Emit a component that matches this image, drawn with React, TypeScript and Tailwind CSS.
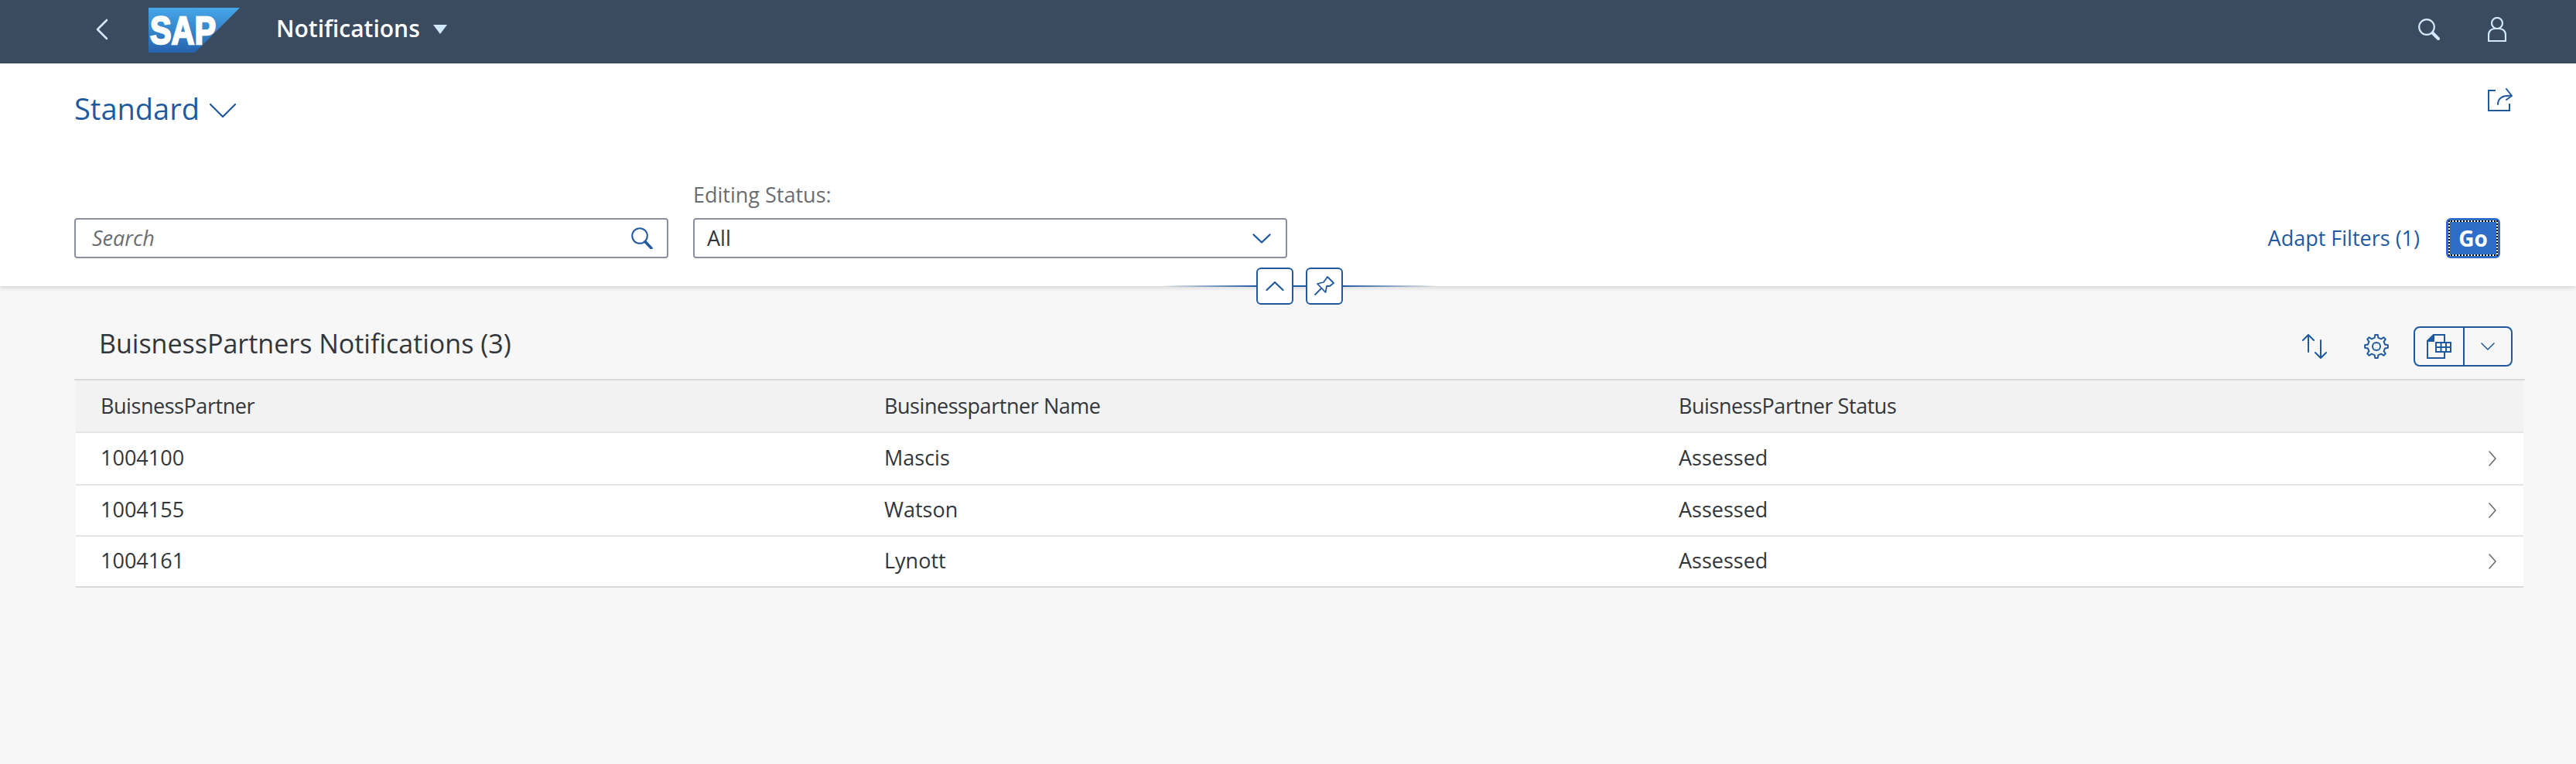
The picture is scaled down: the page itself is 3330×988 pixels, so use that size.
import React from "react";

const rows = [
  ["1004100", "Mascis", "h-[68px]", "border-[#e5e5e5]"],
  ["1004155", "Watson", "h-[66px]", "border-[#e5e5e5]"],
  ["1004161", "Lynott", "h-[66px]", "border-[#d9d9d9]"],
];

function gearPath() {
  const pts: string[] = [];
  const n = 8;
  for (let i = 0; i < n; i++) {
    const a = (i / n) * Math.PI * 2 - Math.PI / 2;
    const step = (Math.PI * 2) / n;
    const list: [number, number][] = [
      [a - step * 0.27, 11.4],
      [a - step * 0.15, 15],
      [a + step * 0.15, 15],
      [a + step * 0.27, 11.4],
    ];
    for (const [t, r] of list) {
      pts.push(`${(16 + r * Math.cos(t)).toFixed(2)} ${(16 + r * Math.sin(t)).toFixed(2)}`);
    }
  }
  return "M" + pts.join(" L") + " Z";
}

function Logo() {
  return (
    <svg viewBox="0 0 118 58" className="w-[118px] h-[58px] ml-[52px] mt-[-5px]">
      <defs>
        <linearGradient id="g" x1="0" y1="0" x2="0" y2="1">
          <stop offset="0" stopColor="#47a7e8" />
          <stop offset="1" stopColor="#2563ad" />
        </linearGradient>
      </defs>
      <polygon points="0,0 118,0 60,58 0,58" fill="url(#g)" />
      <text x="2" y="47" fontFamily="'Liberation Sans', sans-serif" fontWeight="700" fontSize="50" fill="#fff" stroke="#fff" strokeWidth="2.4" textLength="85" lengthAdjust="spacingAndGlyphs">SAP</text>
    </svg>
  );
}

export default function App() {
  return (
    <div className="w-[3330px] h-[988px] bg-[#f7f7f7] flex flex-col overflow-hidden text-[#32363a] font-['Open_Sans',sans-serif]">
      <header className="h-[82px] bg-[#3a4a5f] flex items-center shrink-0">
        <svg viewBox="0 0 16 28" className="w-[16px] h-[28px] ml-[124px] mt-[-6px] text-[#d1e8ff]" fill="none" stroke="currentColor" strokeWidth="2.6" strokeLinecap="round" strokeLinejoin="round">
          <path d="M14 2 L2 14 L14 26" />
        </svg>
        <Logo />
        <div className="ml-[47px] text-[30px] font-semibold text-white leading-none mt-[-8px]">Notifications</div>
        <div className="ml-[17px] mt-[-6px] w-0 h-0 border-l-[9px] border-r-[9px] border-t-[12px] border-l-transparent border-r-transparent border-t-[#d1e8ff]" />
        <div className="ml-auto flex items-center mr-[90px] mt-[-6px] text-[#d1e8ff]">
          <svg viewBox="0 0 28 28" className="w-[28px] h-[28px]" fill="none" stroke="currentColor" strokeWidth="2.2">
            <circle cx="11" cy="11" r="9.8" />
            <path d="M18.5 18.5 L26 26" strokeWidth="4" strokeLinecap="round" />
          </svg>
          <svg viewBox="0 0 24 32" className="w-[24px] h-[32px] ml-[62px]" fill="none" stroke="currentColor" strokeWidth="2.2">
            <circle cx="12" cy="8" r="7" />
            <path d="M1 31 V23 a8 8 0 0 1 8 -8 h6 a8 8 0 0 1 8 8 V31 Z" />
          </svg>
        </div>
      </header>

      <section className="relative h-[288px] bg-white shadow-[0_2px_6px_rgba(0,0,0,0.15)] shrink-0 px-[96px] flex flex-col">
        <div className="flex items-start justify-between pt-[34px]">
          <div className="flex items-center text-[#1f5aa0]">
            <span className="text-[38px] leading-[48px]">Standard</span>
            <svg viewBox="0 0 34 18" className="w-[34px] h-[18px] ml-[13px] mt-[6px]" fill="none" stroke="currentColor" strokeWidth="2.2" strokeLinecap="round" strokeLinejoin="round">
              <path d="M1 1 L17 17 L33 1" />
            </svg>
          </div>
          <svg viewBox="0 0 32 30" className="w-[32px] h-[30px] mr-[-14px] mt-[-2px] text-[#1f5aa0]" fill="none" stroke="currentColor" strokeWidth="2">
            <path d="M10 3 H1 V29 H28 V20" />
            <path d="M13 21 C13 13 19 9 31 10 M24 1 L31 10 L24 15" strokeLinecap="round" strokeLinejoin="round" />
          </svg>
        </div>
        <div className="flex items-end mt-[70px]">
          <div className="w-[768px] h-[52px] border-2 border-[#89919a] rounded-[4px] flex items-center pl-[21px] pr-[18px]">
            <span className="italic text-[#6a6d70] text-[27px]">Search</span>
            <svg viewBox="0 0 28 28" className="w-[28px] h-[28px] ml-auto text-[#1f5aa0]" fill="none" stroke="currentColor" strokeWidth="2">
              <circle cx="11" cy="11" r="9.8" />
              <path d="M18 18.5 L26 27" strokeWidth="3.5" strokeLinecap="round" />
            </svg>
          </div>
          <div className="ml-[32px] flex flex-col">
            <div className="text-[27px] leading-[36px] text-[#6a6d70] mb-[12px]">Editing Status:</div>
            <div className="w-[768px] h-[52px] border-2 border-[#89919a] rounded-[4px] flex items-center pl-[16px] pr-[19px] text-[#1f5aa0]">
              <span className="text-[27px] text-[#32363a]">All</span>
              <svg viewBox="0 0 24 13" className="w-[24px] h-[13px] ml-auto" fill="none" stroke="currentColor" strokeWidth="2.4" strokeLinecap="round" strokeLinejoin="round">
                <path d="M1.5 1.5 L12 11.5 L22.5 1.5" />
              </svg>
            </div>
          </div>
          <div className="ml-auto flex items-center h-[52px] mr-[2px]">
            <span className="text-[27px] text-[#1f5aa0]">Adapt Filters (1)</span>
            <div className="ml-[34px] w-[70px] h-[52px] rounded-[6px] bg-[#2e6dc8] flex items-center justify-center p-[3px]">
              <div className="w-full h-full border-2 border-dotted border-black bg-white">
                <div className="w-full h-full bg-[#2e6dc8] flex items-center justify-center text-white font-bold text-[28px]">Go</div>
              </div>
            </div>
          </div>
        </div>

        <div className="absolute left-[1500px] top-[287px] w-[360px] h-[2px] bg-[linear-gradient(90deg,transparent,#1f5aa0_35%,#1f5aa0_65%,transparent)]" />
        <div className="absolute left-[1624px] top-[264px] w-[48px] h-[48px] bg-white border-2 border-[#1f5aa0] rounded-[6px] flex items-center justify-center text-[#1f5aa0]">
          <svg viewBox="0 0 24 12" className="w-[24px] h-[12px]" fill="none" stroke="currentColor" strokeWidth="2.2" strokeLinecap="round" strokeLinejoin="round">
            <path d="M1.5 11 L12 1 L22.5 11" />
          </svg>
        </div>
        <div className="absolute left-[1688px] top-[264px] w-[48px] h-[48px] bg-white border-2 border-[#1f5aa0] rounded-[6px] flex items-center justify-center text-[#1f5aa0]">
          <svg viewBox="0 0 28 28" className="w-[28px] h-[28px]" fill="none" stroke="currentColor" strokeWidth="1.8" strokeLinejoin="round" strokeLinecap="round">
            <path d="M18 2 L26 10 L21 14 L17 14 L15.5 22 L5 11 L13 9 Z" />
            <path d="M10 17 L2 25" />
          </svg>
        </div>
      </section>

      <main className="pl-[96px] pr-[66px] flex flex-col">
        <div className="h-[120px] flex items-start justify-between pl-[32px] pr-[16px]">
          <h1 className="mt-[52px] text-[34px] leading-[44px] text-[#32363a]">BuisnessPartners Notifications (3)</h1>
          <div className="mt-[52px] flex items-center text-[#1f5aa0] h-[52px]">
            <svg viewBox="0 0 32 32" className="w-[32px] h-[32px]" fill="none" stroke="currentColor" strokeWidth="2" strokeLinecap="round" strokeLinejoin="round">
              <path d="M8 23 V1 M1 8 L8 1 L15 8" />
              <path d="M24 8 V31 M17 24 L24 31 L31 24" />
            </svg>
            <svg viewBox="0 0 32 32" className="w-[32px] h-[32px] ml-[48px]" fill="none" stroke="currentColor" strokeWidth="2" strokeLinejoin="round">
              <circle cx="16" cy="16" r="5" />
              <path d={gearPath()} />
            </svg>
            <div className="ml-[32px] h-[52px] w-[128px] border-2 border-[#1f5aa0] rounded-[8px] flex">
              <div className="w-[64px] border-r-2 border-[#1f5aa0] flex items-center justify-center">
                <svg viewBox="0 0 32 32" className="w-[32px] h-[32px]" fill="none" stroke="currentColor" strokeWidth="2">
                  <path d="M23 10 V1 H9 L1 9 V31 H23 V24" />
                  <path d="M1 9 L9 1 V9 Z" fill="currentColor" />
                  <path d="M12 11 H31 V23 H12 Z M12 17 H31 M18.5 11 V23 M25 11 V23" />
                </svg>
              </div>
              <div className="flex-1 flex items-center justify-center">
                <svg viewBox="0 0 18 10" className="w-[18px] h-[10px]" fill="none" stroke="currentColor" strokeWidth="1.6" strokeLinecap="round" strokeLinejoin="round">
                  <path d="M1 1 L9 9 L17 1" />
                </svg>
              </div>
            </div>
          </div>
        </div>

        <div className="border-t-2 border-[#d9d9d9]">
          <div className="mx-[2px]">
            <div className="h-[68px] bg-[#f2f2f2] border-b-2 border-[#e5e5e5] flex items-center text-[27px] tracking-[-0.45px]">
              <div className="w-[1045px] pl-[32px]">BuisnessPartner</div>
              <div className="w-[1027px]">Businesspartner Name</div>
              <div className="flex-1">BuisnessPartner Status</div>
            </div>
            {rows.map(([id, name, h, line]) => (
              <div key={id} className={`${h} ${line} bg-white border-b-2 flex items-center text-[27px]`}>
                <div className="w-[1045px] pl-[32px] mt-[-2px]">{id}</div>
                <div className="w-[1027px] mt-[-2px]">{name}</div>
                <div className="flex-1 mt-[-2px]">Assessed</div>
                <svg viewBox="0 0 10 20" className="w-[10px] h-[20px] mr-[35px] text-[#6a6d70]" fill="none" stroke="currentColor" strokeWidth="1.6" strokeLinecap="round" strokeLinejoin="round">
                  <path d="M1 1 L9 10 L1 19" />
                </svg>
              </div>
            ))}
          </div>
        </div>
      </main>
    </div>
  );
}
